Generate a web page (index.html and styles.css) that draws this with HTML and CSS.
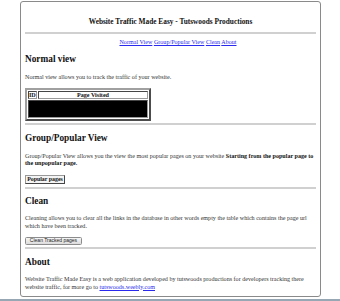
FILE: index.html
```html
<!DOCTYPE html>
<html>
<head>
<meta charset="utf-8">
<title>Website Traffic Made Easy</title>
<link rel="stylesheet" href="styles.css">
</head>
<body>
<div class="box">
  <h1 class="title">Website Traffic Made Easy - Tutswoods Productions</h1>
  <hr class="rule rule-top">
  <nav class="nav">
    <a href="#normal">Normal View</a>
    <a href="#group">Group/Popular View</a>
    <a href="#clean">Clean</a>
    <a href="#about">About</a>
  </nav>

  <h2 class="head head-first" id="normal">Normal view</h2>
  <p class="text">Normal view allows you to track the traffic of your website.</p>
  <table class="visits">
    <tr>
      <th class="id-col">ID</th>
      <th class="page-col">Page Visited</th>
    </tr>
    <tr>
      <td class="redacted" colspan="2"></td>
    </tr>
  </table>
  <hr class="rule rule-a">

  <h2 class="head" id="group">Group/Popular View</h2>
  <p class="text"><span class="line">Group/Popular View allows you the view the most popular pages on your website <b>Starting from the popular page to</b></span><span class="line"><b>the unpopular page.</b></span></p>
  <button class="btn-popular">Popular pages</button>
  <hr class="rule rule-b">

  <h2 class="head" id="clean">Clean</h2>
  <p class="text text-clean">Cleaning allows you to clear all the links in the database in other words empty the table which contains the page url which have been tracked.</p>
  <button class="btn-clean">Clean Tracked pages</button>
  <hr class="rule rule-c">

  <h2 class="head" id="about">About</h2>
  <p class="text text-about"><span class="line">Website Traffic Made Easy is a web application developed by tutswoods productions for developers tracking there</span><span class="line">website traffic, for more go to <a href="#">tutswoods.weebly.com</a></span></p>
</div>
<div class="taskbar"></div>
</body>
</html>
```

FILE: styles.css
```css
html, body {
  margin: 0;
  padding: 0;
  background: #ffffff;
}

body {
  font-family: "Liberation Serif", "Times New Roman", serif;
  color: #222;
  overflow: hidden;
}

.box {
  box-sizing: border-box;
  margin: 1px 0 0 20px;
  width: 301px;
  height: 296px;
  border: 1px solid #8a8a8a;
  border-radius: 3px;
  padding: 15px 4px 0 4px;
}

.title {
  margin: 0;
  font-family: "Liberation Serif", "Times New Roman", serif;
  font-size: 7.35px;
  line-height: 9px;
  font-weight: bold;
  text-align: center;
  color: #111;
}

.rule {
  border: 0;
  height: 2px;
  background: #d0d0d0;
  margin: 0;
}

.rule-top { margin-top: 6px; }
.rule-a { margin-top: 2px; }
.rule-b { margin-top: 2.5px; }
.rule-c { margin-top: 2.5px; }

.nav {
  margin-top: 5px;
  padding-left: 15px;
  font-size: 6.1px;
  line-height: 7px;
  text-align: center;
}

.nav a, .text a {
  color: #2a2aee;
  text-decoration: underline;
}

.head {
  margin: 7.5px 0 0;
  font-family: "Liberation Serif", "Times New Roman", serif;
  font-size: 9.3px;
  line-height: 11px;
  font-weight: bold;
  color: #111;
}

.head-first { margin-top: 8px; }

.text {
  margin: 9px 0 0;
  font-size: 6.1px;
  line-height: 7.5px;
  color: #333;
}

.text .line {
  display: block;
}

.text b { color: #111; }

.text-clean { margin-top: 8px; }
.text-about { margin-top: 8.5px; }

.visits {
  margin-top: 6.5px;
  width: 126px;
  border: 2px outset #a0a0a0;
  border-spacing: 1px;
  font-size: 6.1px;
}

.visits th {
  padding: 0;
  height: 6px;
  line-height: 6px;
  border: 1px inset #9a9a9a;
  background: #fff;
  font-weight: bold;
  color: #111;
}

.id-col {
  width: 7px;
  text-align: left;
}

.redacted {
  height: 16px;
  padding: 0;
  background: #000;
  border: 1px inset #9a9a9a;
}

.btn-popular {
  display: block;
  margin-top: 7px;
  box-sizing: border-box;
  width: 40px;
  height: 9.5px;
  padding: 0;
  font-family: "Liberation Serif", "Times New Roman", serif;
  font-size: 5.9px;
  line-height: 6px;
  font-weight: bold;
  color: #111;
  background: #f4f4f4;
  border: 1.5px outset #999;
  border-radius: 0;
}

.btn-clean {
  display: block;
  margin-top: 7px;
  box-sizing: border-box;
  width: 57px;
  height: 7.5px;
  padding: 0;
  font-family: "Liberation Sans", Arial, sans-serif;
  font-size: 5px;
  line-height: 5px;
  color: #222;
  background: linear-gradient(#f6f6f6, #dcdcdc);
  border: 1px solid #8c8c8c;
  border-radius: 1.5px;
}

.taskbar {
  margin-top: 2px;
  height: 2px;
  background: #98a7b4;
}
```
